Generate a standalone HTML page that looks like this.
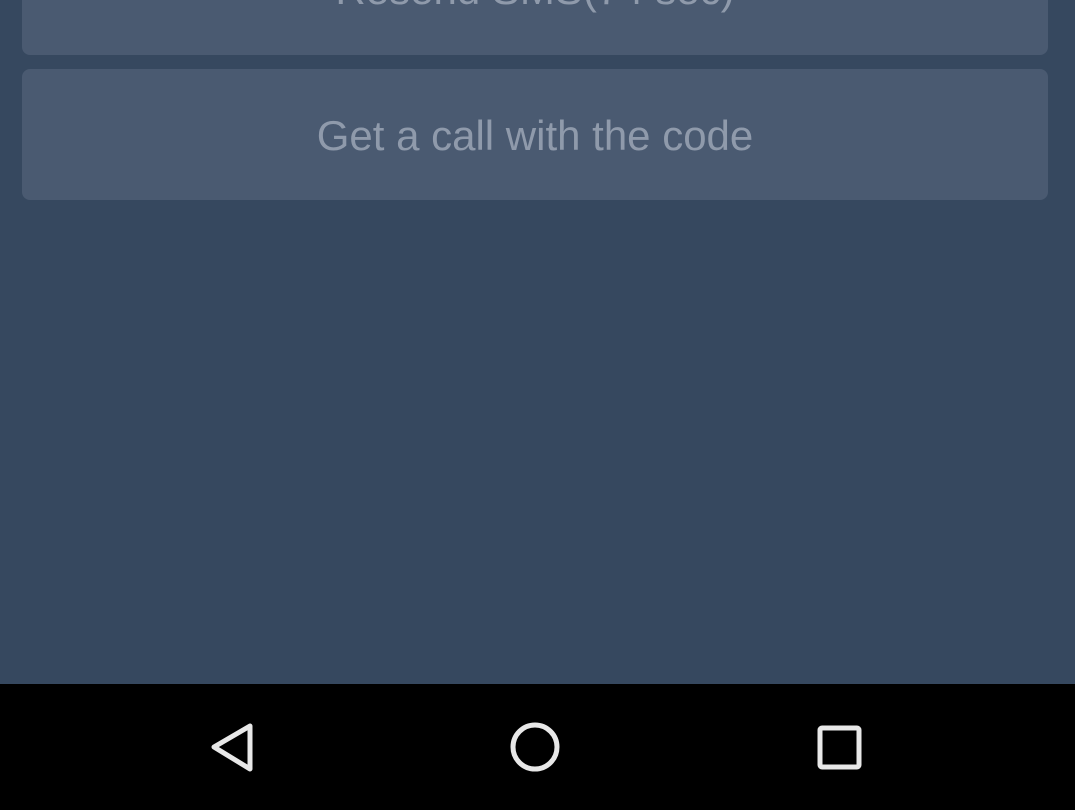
<!DOCTYPE html>
<html><head><style>
body{margin:0;width:1075px;height:810px;background:#36485f;position:relative;overflow:hidden;font-family:"Liberation Sans",sans-serif}
.b{position:absolute;left:22px;width:1026px;background:#4a5a71;border-radius:8px;color:#8f9aab;font-size:42px;text-align:center}
</style></head><body>
<div class="b" style="top:-80px;height:135px"></div>
<div style="position:absolute;left:22px;width:1026px;top:-31px;line-height:42px;font-size:42px;color:#8f9aab;text-align:center">Resend SMS(74 sec)</div>
<div class="b" style="top:69px;height:131px;line-height:133px">Get a call with the code</div>
<div style="position:absolute;left:0;top:684px;width:1075px;height:126px;background:#000"></div>
<svg style="position:absolute;left:0;top:684px" width="1075" height="126">
<path d="M250 42 L214 63 L250 85 Z" fill="none" stroke="#e8e8e8" stroke-width="5" stroke-linejoin="round"/>
<circle cx="535" cy="63" r="22" fill="none" stroke="#e8e8e8" stroke-width="5"/>
<rect x="820" y="44" width="39" height="39" rx="2" fill="none" stroke="#e8e8e8" stroke-width="5"/>
</svg>
</body></html>
